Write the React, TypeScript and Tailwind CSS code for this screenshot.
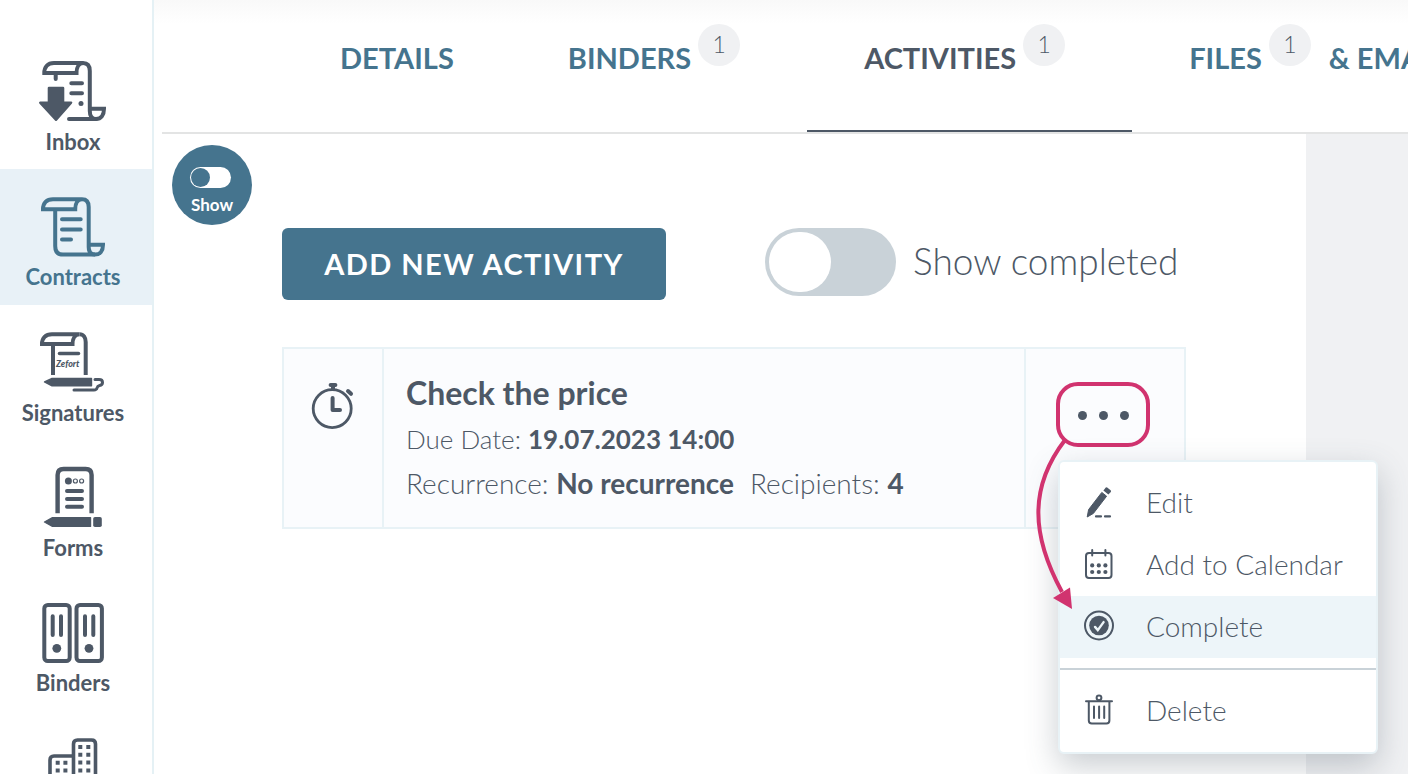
import { useState } from "react";
import type { ReactNode } from "react";
import clsx from "clsx";

interface NavItem {
  id: string;
  label?: string;
  icon: ReactNode;
  active?: boolean;
}

interface Tab {
  label: string;
  count?: number;
  suffix?: string;
  active?: boolean;
}

function NavSvg({ children }: { children: ReactNode }) {
  return (
    <svg
      viewBox="0 0 72 62"
      className="w-[72px] h-[62px] shrink-0"
      fill="none"
      stroke="currentColor"
      strokeWidth="4"
      strokeLinecap="round"
      aria-hidden="true"
    >
      {children}
    </svg>
  );
}

const inboxIcon = (
  <NavSvg>
    <path d="M7.3 13H39.5C39.5 7 42 3 46.2 3H17C10.5 3 7.3 7 7.3 13Z" strokeLinecap="butt" />
    <path d="M46 3C50.5 3 52.8 6 52.8 11V51C52.8 56 55 59 59 59C64 59 67 55 67 48.7H53" strokeLinecap="butt" />
    <path d="M32 59H59M18.7 15V19M34.3 23.3H45M34.3 33.3H45" />
    <circle cx="44" cy="43.4" r="2.5" fill="currentColor" stroke="none" />
    <path
      d="M12 26.7H26Q27.3 26.7 27.3 28V41.6H34.5Q36 42 35 43.4L20 60.4Q19 61.4 18 60.4L2.3 43.4Q1.4 42 3 41.6H10.7V28Q10.7 26.7 12 26.7Z"
      fill="currentColor"
      stroke="none"
    />
  </NavSvg>
);

const contractsIcon = (
  <NavSvg>
    <path d="M6 14.2H38.2C38.2 8 41 4.2 45 4.2H16C9.5 4.2 6 8 6 14.2Z" strokeLinecap="butt" />
    <path d="M45 4.2C49.5 4.2 51.7 7 51.7 12V52C51.7 57 54 59.6 58 59.6C63 59.6 66 56 66 49.7H52" strokeLinecap="butt" />
    <path d="M18.2 15V51C18.2 57 21 59.6 26 59.6H58" strokeLinecap="butt" />
    <path d="M25 24.3H43.7M25 34.4H43.7M25 44.4H34" />
  </NavSvg>
);

const signaturesIcon = (
  <NavSvg>
    <path d="M5 13H35.5C35.5 7 38.5 3.2 42.5 3.2H15C8.5 3.2 5 7 5 13Z" strokeLinecap="butt" />
    <path d="M42.5 3.2C46.5 3.2 48.7 6.5 48.7 11V44M16 14V44" strokeLinecap="butt" />
    <path d="M22.5 22.4H41.5" strokeWidth="3.5" />
    <text
      x="19"
      y="36"
      fill="currentColor"
      stroke="none"
      className="font-['Lato'] text-[9px] font-black italic"
    >
      Zefort
    </text>
    <path
      d="M7.500 51L15 47.4H54.5V54.8H15Z"
      fill="currentColor"
      strokeWidth="1.4"
      strokeLinejoin="round"
    />
    <path d="M58 48.6H62Q65.5 48.6 65.5 51.4Q65.5 54 62.6 54.5Q60.5 54.9 60 57Q59.5 59 57 59H37" strokeWidth="3" />
  </NavSvg>
);

const formsIcon = (
  <NavSvg>
    <path d="M20.6 47.3V9Q20.6 3 26.6 3H48.6Q54.6 3 54.6 9V47.3" strokeLinecap="butt" strokeWidth="4.400" />
    <circle cx="31.4" cy="15" r="3.5" fill="currentColor" stroke="none" />
    <circle cx="38.4" cy="15" r="2" strokeWidth="1.2" />
    <circle cx="44.6" cy="15" r="2" strokeWidth="1.2" />
    <path d="M30 25H45M30 33H45M30 40.7H45" />
    <path
      d="M7.500 56L15.500 51.600H53.500V60.4H15.500Z"
      fill="currentColor"
      strokeWidth="1.4"
      strokeLinejoin="round"
    />
    <rect x="56.2" y="51" width="8.6" height="10" rx="1.8" fill="currentColor" stroke="none" />
  </NavSvg>
);

const bindersIcon = (
  <NavSvg>
    <rect x="7.3" y="4" width="25.4" height="56" rx="3.5" />
    <rect x="39.5" y="4" width="25.4" height="56" rx="3.5" />
    <path d="M15.7 15.3V34M24 15.3V34M48 15.3V34M56.3 15.3V34" />
    <circle cx="19.8" cy="47.3" r="4.4" fill="currentColor" stroke="none" />
    <circle cx="52" cy="47.3" r="4.4" fill="currentColor" stroke="none" />
  </NavSvg>
);

const companiesIcon = (
  <NavSvg>
    <path d="M36.5 61V8Q36.5 4 40.5 4H54.5Q58.5 4 58.5 8V61M36.5 20H17Q13 20 13 24V61" strokeWidth="3.6" />
    <path
      d="M43.3 9V41M51.3 9V41M20.7 24.7V41M28.4 24.7V41"
      strokeDasharray="4 3.8"
      strokeLinecap="butt"
    />
  </NavSvg>
);

const navItems: NavItem[] = [
  { id: "inbox", label: "Inbox", icon: inboxIcon },
  { id: "contracts", label: "Contracts", icon: contractsIcon, active: true },
  { id: "signatures", label: "Signatures", icon: signaturesIcon },
  { id: "forms", label: "Forms", icon: formsIcon },
  { id: "binders", label: "Binders", icon: bindersIcon },
  { id: "companies", icon: companiesIcon },
];

const tabs: Tab[] = [
  { label: "Details" },
  { label: "Binders", count: 1 },
  { label: "Activities", count: 1, active: true },
  { label: "Files", count: 1, suffix: "& Emails" },
];

function Sidebar() {
  return (
    <nav className="w-[154px] shrink-0 overflow-hidden border-r-2 border-[#e5f1f5] pt-[34px]">
      {navItems.map((item) => (
        <a
          key={item.id}
          href="#"
          aria-label={item.id}
          className={clsx(
            "flex flex-col items-center pt-[26px] pr-1.5 text-[22px] leading-6 font-bold",
            item.active ? "h-[136px] bg-[#e8f1f7] text-[#45748e]" : "h-[135px]",
          )}
        >
          {item.icon}
          {item.label && <span className="mt-2">{item.label}</span>}
        </a>
      ))}
    </nav>
  );
}

function Tabs() {
  return (
    <header className="overflow-hidden bg-linear-to-b from-[#f9f9f9] to-white to-[24px] pl-2">
      <div className="flex h-[134px] border-b-2 border-[#e3e4e4] pl-[121px]">
        {tabs.map((tab) => (
          <a
            key={tab.label}
            href="#"
            className={clsx(
              "flex shrink-0 px-[57px] pt-6 text-[29px] leading-[68px] font-bold uppercase whitespace-nowrap",
              tab.active ? "border-b-2 border-[#4d5866]" : "text-[#45748e]",
            )}
          >
            {tab.label}
            {tab.count && (
              <span className="ml-[7px] mr-2.5 size-[42px] rounded-full bg-[#f0f1f3] text-center text-[23px] leading-10 font-light">
                <span className="text-[#4d5866]">{tab.count}</span>
              </span>
            )}
            {tab.suffix && <span className="ml-2">{tab.suffix}</span>}
          </a>
        ))}
      </div>
    </header>
  );
}

const menuIconCls = "size-8 shrink-0 mb-0.5";

const editIcon = (
  <svg viewBox="0 0 32 32" className={menuIconCls} fill="currentColor" aria-hidden="true">
    <path d="M4.2 31L5.6 23.6L18.8 6.4L23.6 10.2L10.4 27.4Z" stroke="currentColor" strokeWidth="1" strokeLinejoin="round" />
    <path d="M20.4 4.6L22.6 1.8Q23.3 1 24.2 1.6L27.6 4.3Q28.4 5 27.8 5.9L25.4 8.6Z" />
    <path d="M13 30.4H18M22 30.4H27" stroke="currentColor" strokeWidth="2.2" strokeLinecap="round" />
  </svg>
);

const calendarIcon = (
  <svg viewBox="0 0 32 32" className={menuIconCls} fill="none" stroke="currentColor" strokeWidth="2" strokeLinecap="round" aria-hidden="true">
    <rect x="3" y="5" width="25.5" height="25" rx="3" />
    <path d="M9.2 2V7.6M22.4 2V7.6" />
    <g fill="currentColor" stroke="none">
      <circle cx="9.2" cy="17.4" r="2.1" />
      <circle cx="15.8" cy="17.4" r="2.1" />
      <circle cx="22.4" cy="17.4" r="2.1" />
      <circle cx="9.2" cy="24" r="2.1" />
      <circle cx="15.8" cy="24" r="2.1" />
      <circle cx="22.4" cy="24" r="2.1" />
    </g>
  </svg>
);

const completeIcon = (
  <svg viewBox="0 0 32 32" className={menuIconCls} fill="none" aria-hidden="true">
    <circle cx="16" cy="15.500" r="14" stroke="currentColor" strokeWidth="2" />
    <circle cx="16" cy="15.500" r="9.8" fill="currentColor" />
    <path d="M12 16.9L14.8 20.1L20.6 12.1" stroke="#edf5f9" strokeWidth="2.4" strokeLinecap="round" />
  </svg>
);

const deleteIcon = (
  <svg viewBox="0 0 32 32" className={menuIconCls} fill="none" stroke="currentColor" strokeWidth="2" strokeLinecap="round" aria-hidden="true">
    <circle cx="16" cy="3.8" r="2.4" />
    <path d="M3 7.2H29M5.8 8V26.5Q5.8 29.6 8.8 29.6H23.4Q26.4 29.6 26.4 26.5V8" />
    <path d="M11 12.6V24M16.1 12.6V24M21.2 12.6V24" />
  </svg>
);

function MenuItem({ icon, label, active }: { icon: ReactNode; label: string; active?: boolean }) {
  return (
    <button
      type="button"
      role="menuitem"
      className={clsx(
        "flex h-[62px] w-full items-center gap-[31px] pl-[23px] text-[28px] font-light whitespace-nowrap",
        active && "bg-[#edf5f9]",
      )}
    >
      {icon}
      <span className="pb-0.5">{label}</span>
    </button>
  );
}

function ActivityMenu() {
  const [open, setOpen] = useState(true);

  return (
    <div className="relative">
      <button
        type="button"
        aria-label="Activity options"
        aria-expanded={open}
        onClick={() => setOpen(!open)}
        className="flex h-[65px] w-[94px] items-center justify-center gap-3 rounded-[22px] border-4 border-[#d1336f] pt-0.5"
      >
        <span className="size-[9px] rounded-full bg-[#4d5866]" />
        <span className="size-[9px] rounded-full bg-[#4d5866]" />
        <span className="size-[9px] rounded-full bg-[#4d5866]" />
      </button>
      {open && (
        <>
          <div
            role="menu"
            className="absolute top-[78px] left-[2px] w-80 rounded-md border-2 border-[#e8f2f6] bg-white py-2.5 shadow-[0_12px_32px_rgba(77,88,102,0.3)]"
          >
            <MenuItem icon={editIcon} label="Edit" />
            <MenuItem icon={calendarIcon} label="Add to Calendar" />
            <MenuItem icon={completeIcon} label="Complete" active />
            <hr className="my-2.5 border-t-2 border-[#c9d2d8]" />
            <MenuItem icon={deleteIcon} label="Delete" />
          </div>
          <svg
            viewBox="0 0 50 180"
            className="pointer-events-none absolute top-[55px] -left-[25px] h-[180px] w-[50px]"
            fill="none"
            aria-hidden="true"
          >
            <path d="M34 3C-2 50 0 98 31 155" stroke="#d1336f" strokeWidth="4" />
            <path d="M22 161L39 150.500L41 172Z" fill="#d1336f" />
          </svg>
        </>
      )}
    </div>
  );
}

function ActivityCard() {
  return (
    <article className="mt-[47px] flex border-2 border-[#e8f2f6] bg-[#fbfcfe]">
      <div className="w-[100px] shrink-0 border-r-2 border-[#e8f2f6] pt-8 pl-[26px]">
        <svg viewBox="0 0 46 50" className="h-[50px] w-[46px]" fill="none" stroke="currentColor" strokeLinecap="round" aria-hidden="true">
          <circle cx="22.2" cy="27.6" r="19" strokeWidth="2.8" />
          <path d="M20.6 4H25.4" strokeWidth="4" />
          <path d="M23 5V8" strokeWidth="4" strokeLinecap="butt" />
          <path d="M38 10L41 12.800" strokeWidth="4" />
          <path d="M22.6 17V29H30" strokeWidth="4" strokeLinejoin="round" />
        </svg>
      </div>
      <div className="min-w-0 flex-1 px-[22px] pt-6 pb-[22px] text-[28px] leading-[44px] font-light">
        <h2 className="mb-1 text-[32px] leading-10 font-bold">Check the price</h2>
        <p className="text-[26px]">
          Due Date: <strong className="font-bold">19.07.2023 14:00</strong>
        </p>
        <p className="flex gap-4">
          <span>
            Recurrence: <strong className="font-bold">No recurrence</strong>
          </span>
          <span>
            Recipients: <strong className="font-bold">4</strong>
          </span>
        </p>
      </div>
      <div className="w-40 shrink-0 border-l-2 border-[#e8f2f6] pt-[33px] pl-[30px]">
        <ActivityMenu />
      </div>
    </article>
  );
}

export default function App() {
  const [showCompleted, setShowCompleted] = useState(false);

  return (
    <div className="flex h-screen overflow-hidden bg-white font-['Lato',sans-serif] text-[#4d5866]">
      <Sidebar />
      <div className="flex min-w-0 flex-1 flex-col">
        <Tabs />
        <div className="flex flex-1">
          <main className="flex min-w-0 flex-1 gap-[30px] pr-[120px] pl-[18px]">
            <button
              type="button"
              className="mt-[11px] flex size-20 shrink-0 flex-col items-center rounded-full bg-[#45748e] pt-[22px] text-[17px] leading-5 font-bold text-white"
            >
              <span className="mr-1 flex h-[21px] w-[41px] items-center rounded-full bg-white px-px">
                <span className="size-[19px] rounded-full bg-[#45748e]" />
              </span>
              <span className="mt-[7px]">Show</span>
            </button>
            <section className="min-w-0 flex-1 pt-[94px]">
              <div className="flex items-start gap-[99px]">
                <button
                  type="button"
                  className="h-[72px] w-96 rounded-md bg-[#45748e] text-[29px] font-bold tracking-wider text-white uppercase"
                >
                  Add new activity
                </button>
                <label className="flex cursor-pointer items-center gap-[17px] text-[37px] leading-[66px] font-light whitespace-nowrap">
                  <input
                    type="checkbox"
                    checked={showCompleted}
                    onChange={(e) => setShowCompleted(e.target.checked)}
                    className="h-[68px] w-[131px] shrink-0 appearance-none rounded-full bg-[#c9d2d8] p-1 before:block before:h-[60px] before:w-[62px] before:rounded-full before:bg-white before:content-[''] checked:bg-[#45748e] checked:before:ml-auto"
                  />
                  <span className="pb-0.5">Show completed</span>
                </label>
              </div>
              <ActivityCard />
            </section>
          </main>
          <aside className="w-[102px] shrink-0 bg-[#f0f1f3]" />
        </div>
      </div>
    </div>
  );
}
